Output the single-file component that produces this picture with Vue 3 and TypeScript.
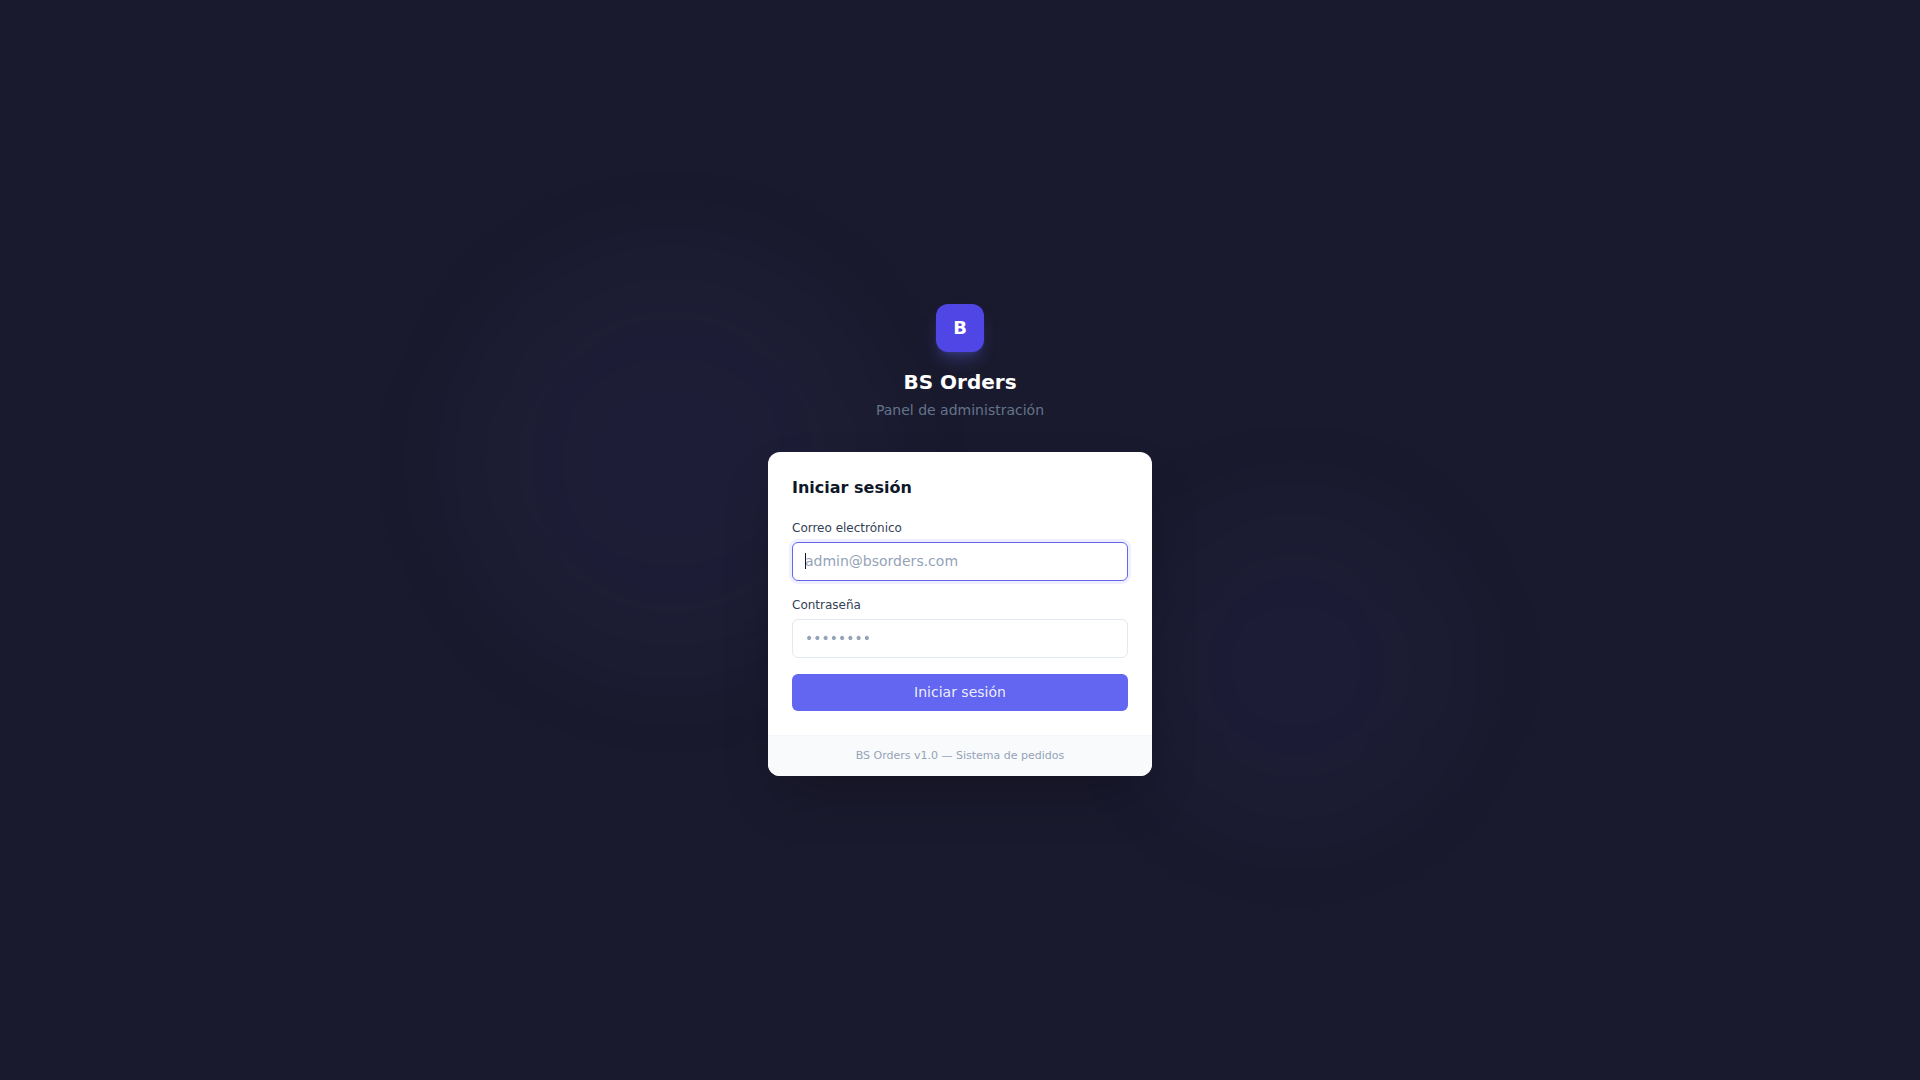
<script setup lang="ts">
import { onMounted, ref } from 'vue'

const email = ref('')
const password = ref('')
const emailFocused = ref(false)
const emailInput = ref<HTMLInputElement | null>(null)

onMounted(() => emailInput.value?.focus())
</script>

<template>
  <main class="page">
    <div class="glow glow-left" aria-hidden="true"></div>
    <div class="glow glow-right" aria-hidden="true"></div>

    <div class="content">
      <header class="brand">
        <div class="logo">B</div>
        <h1 class="brand-name">BS Orders</h1>
        <p class="brand-subtitle">Panel de administración</p>
      </header>

      <section class="card">
        <form class="card-body" @submit.prevent>
          <h2 class="card-title">Iniciar sesión</h2>
          <div class="field">
            <label for="email">Correo electrónico</label>
            <div class="control">
              <input
                id="email"
                ref="emailInput"
                v-model="email"
                type="email"
                placeholder="admin@bsorders.com"
                :class="{ blank: !email }"
                @focus="emailFocused = true"
                @blur="emailFocused = false"
              />
              <span v-if="emailFocused && !email" class="caret" aria-hidden="true"></span>
            </div>
          </div>
          <div class="field">
            <label for="password">Contraseña</label>
            <div class="control">
              <input id="password" v-model="password" type="password" placeholder="••••••••" />
            </div>
          </div>
          <button class="submit" type="submit">Iniciar sesión</button>
        </form>
        <footer class="card-footer">BS Orders v1.0 — Sistema de pedidos</footer>
      </section>
    </div>
  </main>
</template>

<style>
body {
  margin: 0;
  background: #1a1a2e;
}
</style>

<style scoped>
.page,
.page * {
  box-sizing: border-box;
}

.page {
  position: relative;
  display: flex;
  align-items: center;
  justify-content: center;
  min-height: 100vh;
  padding: 16px;
  overflow: hidden;
  background: #1a1a2e;
  font-family: 'DejaVu Sans', sans-serif;
  font-size: 14px;
  line-height: 20px;
}

.glow {
  position: absolute;
  border-radius: 50%;
  filter: blur(64px);
}

.glow-left {
  top: 25%;
  left: 25%;
  width: 384px;
  height: 384px;
  background: rgba(99, 102, 241, 0.05);
}

.glow-right {
  right: 25%;
  bottom: 25%;
  width: 288px;
  height: 288px;
  background: rgba(79, 70, 229, 0.05);
}

.content {
  position: relative;
  width: 100%;
  max-width: 384px;
}

.brand {
  display: flex;
  flex-direction: column;
  align-items: center;
  margin-bottom: 32px;
}

.logo {
  display: flex;
  align-items: center;
  justify-content: center;
  width: 48px;
  height: 48px;
  margin-bottom: 16px;
  border-radius: 12px;
  background: #4f46e5;
  box-shadow:
    0 10px 15px -3px rgba(99, 102, 241, 0.3),
    0 4px 6px -4px rgba(99, 102, 241, 0.3);
  color: #fff;
  font-size: 18px;
  font-weight: 700;
}

.brand-name {
  margin: 0 0 4px;
  color: #fff;
  font-size: 20px;
  font-weight: 700;
  line-height: 28px;
}

.brand-subtitle {
  margin: 0;
  color: #64748b;
}

.card {
  overflow: hidden;
  border-radius: 12px;
  background: #fff;
  box-shadow: 0 25px 50px -12px rgba(0, 0, 0, 0.25);
}

.card-body {
  display: flex;
  flex-direction: column;
  gap: 16px;
  padding: 24px;
}

.card-title {
  margin: 0 0 4px;
  color: #0f172a;
  font-size: 16px;
  font-weight: 600;
  line-height: 24px;
}

.field {
  display: flex;
  flex-direction: column;
  gap: 6px;
}

.field label {
  color: #334155;
  font-size: 12px;
  line-height: 16px;
}

.control {
  position: relative;
  display: flex;
}

.control input {
  width: 100%;
  padding: 8px 12px;
  border: 1px solid #e2e8f0;
  border-radius: 6px;
  outline: none;
  background: #fff;
  color: #0f172a;
  font: inherit;
  line-height: 21px;
}

.control input::placeholder {
  color: #94a3b8;
}

.control input:focus {
  border-color: #6366f1;
  box-shadow: 0 0 0 3px rgba(99, 102, 241, 0.1);
}

.control input.blank {
  caret-color: transparent;
}

/* Text cursor shown over the placeholder of the empty, focused field */
.caret {
  position: absolute;
  top: 11px;
  left: 13px;
  width: 1px;
  height: 16px;
  background: #0f172a;
}

.submit {
  padding: 8px 16px;
  border: 0;
  border-radius: 6px;
  background: #6366f1;
  color: rgba(255, 255, 255, 0.9);
  font: inherit;
  line-height: 21px;
  cursor: pointer;
}

.card-footer {
  padding: 12px 24px;
  border-top: 1px solid #f1f5f9;
  background: #f8fafc;
  color: #94a3b8;
  font-size: 11px;
  line-height: 16px;
  text-align: center;
}
</style>
